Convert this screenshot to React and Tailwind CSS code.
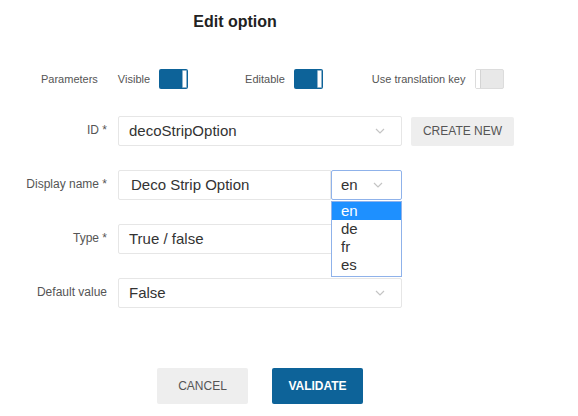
import React from 'react';

function Chevron() {
  return (
    <svg width="10" height="6" viewBox="0 0 10 6" className="shrink-0">
      <polyline points="1,1 5,5 9,1" fill="none" stroke="#c4c4c4" strokeWidth="1.2" />
    </svg>
  );
}

function Toggle({ on }) {
  if (on) {
    return (
      <div className="w-[29px] h-[20px] rounded-[2px] bg-[#0d6399] flex justify-end items-stretch p-[1px]">
        <div className="w-[5px] bg-white rounded-[1px] border border-[#8fb3cc]" />
      </div>
    );
  }
  return (
    <div className="w-[29px] h-[20px] rounded-[2px] bg-[#e8e8e8] border border-[#dcdcdc] flex justify-start items-stretch">
      <div className="w-[5px] bg-white border-r border-[#d4d4d4]" />
    </div>
  );
}

function Label({ children }) {
  return (
    <div className="w-[107px] text-right text-[12px] text-[#555] pb-[2px] shrink-0">{children}</div>
  );
}

function SelectBox({ value, className = '' }) {
  return (
    <div className={`h-[30px] border border-[#e6e6e6] rounded-[2px] flex items-center justify-between pl-[10px] pr-[16px] text-[15px] text-[#333] ${className}`}>
      <span>{value}</span>
      <Chevron />
    </div>
  );
}

export default function App() {
  return (
    <div className="w-[578px] h-[416px] bg-white flex flex-col font-['Liberation_Sans','Arial',sans-serif]">
      <h1 className="w-[470px] text-center mt-[10px] text-[16px] font-bold text-[#222]">
        Edit option
      </h1>

      <div className="flex items-center mt-[35px] h-[20px] text-[11px] text-[#555]">
        <span className="ml-[41px]">Parameters</span>
        <span className="ml-[20px]">Visible</span>
        <div className="ml-[9px]"><Toggle on /></div>
        <span className="ml-[57px]">Editable</span>
        <div className="ml-[9px]"><Toggle on /></div>
        <span className="ml-[49px]">Use translation key</span>
        <div className="ml-[10px]"><Toggle on={false} /></div>
      </div>

      <div className="flex flex-col gap-[24px] mt-[27px]">
        <div className="flex items-center">
          <Label>ID *</Label>
          <SelectBox value="decoStripOption" className="ml-[11px] w-[284px]" />
          <button className="ml-[9px] w-[103px] h-[29px] bg-[#eeeeee] rounded-[2px] text-[12px] text-[#555] uppercase">
            Create new
          </button>
        </div>

        <div className="flex items-center">
          <Label>Display name *</Label>
          <div className="ml-[11px] w-[213px] h-[30px] border border-[#e6e6e6] rounded-l-[2px] flex items-center pl-[12px] text-[15px] text-[#333]">
            Deco Strip Option
          </div>
          <div className="relative">
            <div className="w-[71px] h-[30px] border border-[#8fb2ea] rounded-[2px] flex items-center justify-between pl-[9px] pr-[18px] text-[15px] text-[#333]">
              <span>en</span>
              <Chevron />
            </div>
            <ul className="absolute left-0 top-[31px] w-[71px] h-[76px] bg-white border border-[#8fb2ea] z-10 text-[15px] leading-[18px] text-[#333]">
              <li className="bg-[#1e90ff] text-white pl-[9px] h-[18px]">en</li>
              <li className="pl-[9px] h-[18px]">de</li>
              <li className="pl-[9px] h-[18px]">fr</li>
              <li className="pl-[9px] h-[18px]">es</li>
            </ul>
          </div>
        </div>

        <div className="flex items-center">
          <Label>Type *</Label>
          <SelectBox value="True / false" className="ml-[11px] w-[284px]" />
        </div>

        <div className="flex items-center">
          <Label>Default value</Label>
          <SelectBox value="False" className="ml-[11px] w-[284px]" />
        </div>
      </div>

      <div className="flex gap-[24px] ml-[157px] mt-[60px]">
        <button className="w-[91px] h-[36px] bg-[#eeeeee] rounded-[2px] text-[12px] text-[#555]">CANCEL</button>
        <button className="w-[91px] h-[36px] bg-[#0d6399] rounded-[2px] text-[12px] font-bold text-white">VALIDATE</button>
      </div>
    </div>
  );
}
